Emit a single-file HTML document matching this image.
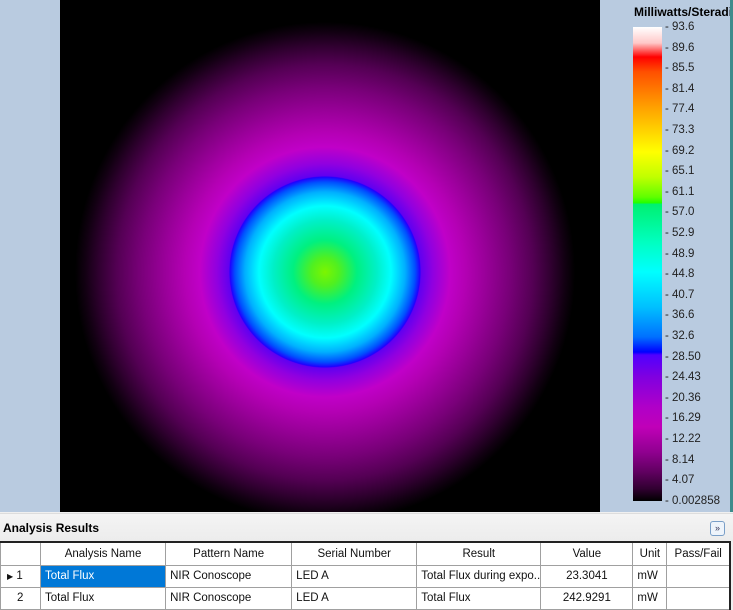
<!DOCTYPE html>
<html><head><meta charset="utf-8"><style>
*{margin:0;padding:0;box-sizing:border-box}
body{width:733px;height:609px;overflow:hidden;background:#f0f0f0;font-family:"Liberation Sans",Arial,sans-serif;position:relative}
#left{position:absolute;left:0;top:0;width:60px;height:512px;background:#b9cbe0}
#img{position:absolute;left:60px;top:0;width:540px;height:512px;background:#000;overflow:hidden}
#glow{position:absolute;left:0;top:0;width:540px;height:512px;
background:radial-gradient(circle at 265px 272px,
#7cf500 0px,#50f020 14px,#00f080 32px,#00f0c8 52px,#00ffff 66px,#00b0ff 80px,#0050ff 90px,#2000ff 95px,
#6000f0 96px,#9000e0 108px,#c000c8 125px,#b400b4 140px,#9a009a 160px,#780078 185px,#540054 208px,#300030 226px,#120012 240px,#000 250px)}
#right{position:absolute;left:600px;top:0;width:133px;height:512px;background:#b9cbe0;border-right:3px solid #3d8c8c}
#title{position:absolute;left:34px;top:5px;font-weight:bold;font-size:12px;white-space:nowrap;color:#000;width:96px;overflow:hidden}
#bar{position:absolute;left:33px;top:27px;width:29px;height:474px;
background:linear-gradient(to bottom,#fff 0px,#ffc8c8 16px,#f00 30px,#ff5000 45px,#ffa000 80px,#ffe000 110px,#ffff00 125px,#c0ff00 150px,#60ff00 170px,#20ff00 176px,#00f070 177px,#00ffc0 215px,#00ffff 245px,#00c0ff 280px,#0070ff 310px,#0000ff 325px,#5000ff 328px,#8000e0 350px,#b000c8 380px,#c000b8 400px,#900090 425px,#600060 445px,#300030 462px,#000 474px)}
.lab{position:absolute;left:65px;font-size:11.5px;color:#222;white-space:nowrap}
#hdr{position:absolute;left:0;top:513px;width:733px;height:28px;background:linear-gradient(#f4f4f4,#ececec);border-top:1px solid #ddd}
#hdr b{position:absolute;left:3px;top:7px;font-size:12px}
#btn{position:absolute;left:710px;top:7px;width:15px;height:15px;border:1px solid #7a9fc8;border-radius:3px;background:#eef4fb;font-size:9px;text-align:center;line-height:13px;color:#335}
table{position:absolute;left:0;top:541px;width:731px;table-layout:fixed;border-collapse:collapse;font-size:11.5px;background:#fff;border-top:2px solid #222;border-right:2px solid #222}
td{border:1px solid #a0a0a0;height:22px;padding:0 4px;white-space:nowrap;color:#111;overflow:hidden}
tr.h td{text-align:center;height:23px}
.c{text-align:center}
.sel{background:#0078d7;color:#fff}
</style></head><body>
<div id="left"></div>
<div id="img"><div id="glow"></div></div>
<div id="right">
<div id="title">Milliwatts/Steradian</div>
<div id="bar"></div>
</div>
<div id="hdr"><b>Analysis Results</b><div id="btn">&#x00BB;</div></div>
<table>
<colgroup><col style="width:40px"><col style="width:125px"><col style="width:126px"><col style="width:125px"><col style="width:124px"><col style="width:92px"><col style="width:34px"><col style="width:63px"></colgroup>
<tr class="h"><td></td><td>Analysis Name</td><td>Pattern Name</td><td>Serial Number</td><td>Result</td><td>Value</td><td>Unit</td><td>Pass/Fail</td></tr>
<tr><td style="padding-left:6px"><span style="font-size:8px">&#9654;</span> 1</td><td class="sel">Total Flux</td><td>NIR Conoscope</td><td>LED A</td><td>Total Flux during expo...</td><td class="c">23.3041</td><td>mW</td><td></td></tr>
<tr><td style="padding-left:16px">2</td><td>Total Flux</td><td>NIR Conoscope</td><td>LED A</td><td>Total Flux</td><td class="c">242.9291</td><td>mW</td><td></td></tr>
</table>
<script>
var L=["93.6","89.6","85.5","81.4","77.4","73.3","69.2","65.1","61.1","57.0","52.9","48.9","44.8","40.7","36.6","32.6","28.50","24.43","20.36","16.29","12.22","8.14","4.07","0.002858"];
var r=document.getElementById('right');
for(var i=0;i<L.length;i++){var d=document.createElement('div');d.className='lab';d.style.top=(21+i*20.6)+'px';d.textContent='- '+L[i];r.appendChild(d);}
</script>
</body></html>
